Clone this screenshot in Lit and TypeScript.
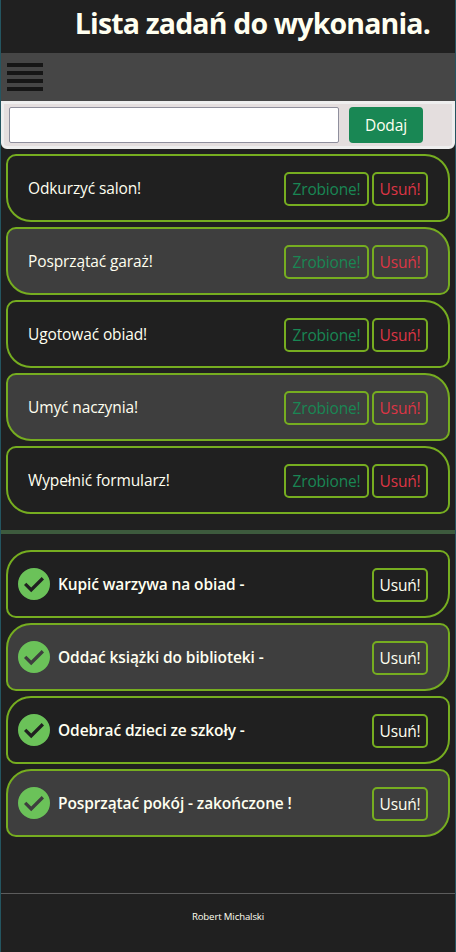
import { LitElement, html, css } from "lit";
import { customElement, property } from "lit/decorators.js";

const shared = css`
  * { box-sizing: border-box; }
  button {
    font: inherit;
    letter-spacing: inherit;
    color: ivory;
    background: transparent;
    margin: 0;
    padding: 0;
    white-space: nowrap;
  }
`;

@customElement("task-item")
class TaskItem extends LitElement {
  @property() label = "";
  @property({ type: Boolean }) done = false;
  @property({ type: Boolean }) alt = false;

  static styles = [shared, css`
    :host { display: block; }
    .item {
      display: flex;
      align-items: flex-start;
      height: 68px;
      padding: 16px 20px 0;
      border: 2px solid #76ad20;
      border-radius: 10px 25px 10px 25px;
    }
    .item.alt { background: #3e3e3e; }
    .item.done { border-radius: 25px 10px 25px 10px; padding-left: 10px; }
    .label { flex: 1; line-height: 33px; color: ivory; white-space: nowrap; }
    .done .label { font-weight: 600; padding-left: 8px; letter-spacing: -0.11px; }
    .icon { width: 32px; height: 32px; flex: none; }
    .action {
      height: 34px;
      line-height: 31px;
      border: 2px solid #76ad20;
      border-radius: 5px;
      width: 56px;
      letter-spacing: -0.2px;
    }
    .finish { width: 85px; margin-right: 3px; color: #198754; }
    .remove { color: #dc3545; }
    .done .remove { color: ivory; }
  `];

  render() {
    return html`
      <div class="item ${this.done ? "done" : ""} ${this.alt ? "alt" : ""}">
        ${this.done
          ? html`<svg class="icon" viewBox="0 0 32 32">
              <path fill="#6bc259" fill-rule="evenodd"
                d="M16 0a16 16 0 1 0 0 32 16 16 0 0 0 0-32zM13.2 24.2 6 17l2.3-2.3 4.9 4.9L23.7 9.1l2.3 2.3z"/>
            </svg>`
          : null}
        <span class="label">${this.label}</span>
        ${this.done ? null : html`<button class="action finish">Zrobione!</button>`}
        <button class="action remove">Usuń!</button>
      </div>`;
  }
}

@customElement("app-root")
class AppRoot extends LitElement {
  private todo = ["Odkurzyć salon!", "Posprzątać garaż!", "Ugotować obiad!", "Umyć naczynia!", "Wypełnić formularz!"];
  private finished = ["Kupić warzywa na obiad -", "Oddać książki do biblioteki -", "Odebrać dzieci ze szkoły -", "Posprzątać pokój - zakończone !"];

  static styles = [shared, css`
    :host {
      display: block;
      height: 952px;
      overflow: hidden;
      box-sizing: border-box;
      border: solid #245560;
      border-width: 0 1px;
      background: #202020;
      color: ivory;
      font: 15.5px "Open Sans", "Noto Sans", sans-serif;
      letter-spacing: -0.12px;
    }
    h1 {
      margin: 0;
      height: 53px;
      padding-right: 25px;
      text-align: right;
      font-size: 28.5px;
      font-weight: 700;
      letter-spacing: -0.84px;
      line-height: 46px;
      white-space: nowrap;
    }
    nav { height: 48px; background: #464646; padding: 10px 6px; }
    .menu { display: grid; gap: 4px; width: 36px; }
    .bar { height: 4px; background: #161616; }
    form {
      display: flex;
      gap: 10px;
      height: 48px;
      padding: 3px 5px;
      background: #e4dede;
      border: 3px solid #eeeeee;
      border-radius: 0 0 6px 6px;
    }
    input {
      width: 330px;
      height: 36px;
      border: 1px solid #8f8f9d;
      border-radius: 2px;
      background: #fff;
      margin: 0;
    }
    .add { width: 74px; height: 36px; border: 0; border-radius: 4px; background: #198754; }
    .list { display: grid; gap: 5px; padding: 5px 5px 0; }
    .divider { height: 4px; margin: 16px 0 11px; background: #3d5a3d; }
    footer {
      margin-top: 56px;
      border-top: 1px solid #5c5c5c;
      text-align: center;
      font-size: 9.6px;
      line-height: 45px;
    }
  `];

  render() {
    return html`
      <h1>Lista zadań do wykonania.</h1>
      <nav>
        <div class="menu">${[0, 1, 2, 3].map(() => html`<div class="bar"></div>`)}</div>
      </nav>
      <form>
        <input type="text" />
        <button type="button" class="add">Dodaj</button>
      </form>
      <div class="list">
        ${this.todo.map((t, i) => html`<task-item .label=${t} .alt=${i % 2 === 1}></task-item>`)}
      </div>
      <div class="divider"></div>
      <div class="list">
        ${this.finished.map((t, i) => html`<task-item done .label=${t} .alt=${i % 2 === 1}></task-item>`)}
      </div>
      <footer>Robert Michalski</footer>`;
  }
}
